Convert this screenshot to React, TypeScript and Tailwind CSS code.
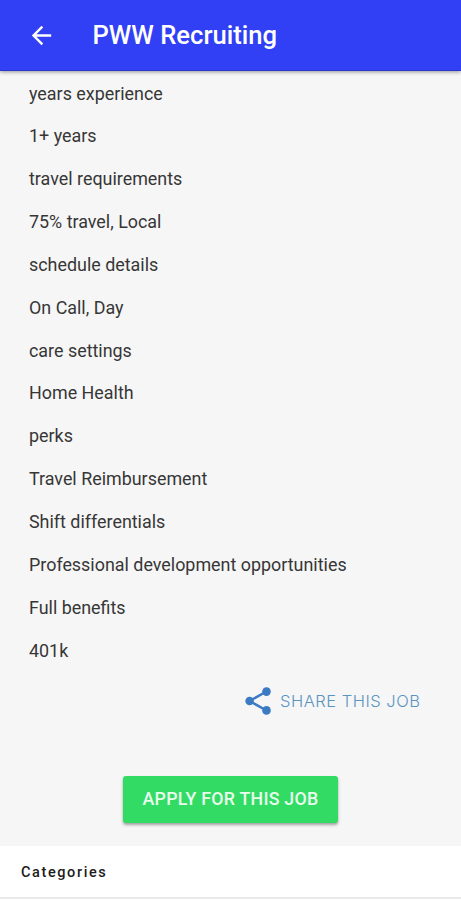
import { MdArrowBack } from "react-icons/md";

const details = [
  "years experience",
  "1+ years",
  "travel requirements",
  "75% travel, Local",
  "schedule details",
  "On Call, Day",
  "care settings",
  "Home Health",
  "perks",
  "Travel Reimbursement",
  "Shift differentials",
  "Professional development opportunities",
  "Full benefits",
  "401k",
];

function ShareIcon() {
  return (
    <svg viewBox="0 0 26 28" className="h-7 w-[26px] shrink-0 text-[#3d7ac4]" fill="currentColor">
      <path d="M21.5 4.5 4.5 14l17 9.5" fill="none" stroke="currentColor" strokeWidth="2.5" />
      <circle cx="21.5" cy="4.6" r="4.3" />
      <circle cx="4.6" cy="14" r="4.3" />
      <circle cx="21.5" cy="23.4" r="4.3" />
    </svg>
  );
}

export default function App() {
  return (
    <div className="flex h-[900px] w-full flex-col overflow-hidden bg-[#f6f6f6] font-['Roboto',sans-serif]">
      <header className="flex h-[71px] shrink-0 items-center border-b border-[#2a35d0] bg-[#313ff5] pl-[27px] text-white shadow-[0_1px_4px_rgba(0,0,0,0.4)]">
        <MdArrowBack className="size-[29px]" />
        <h1 className="ml-[36.5px] text-[25.6px] font-medium">PWW Recruiting</h1>
      </header>

      <ul className="flex shrink-0 flex-col pt-[1.6px] pl-[29px]">
        {details.map((line) => (
          <li key={line} className="flex h-[42.85px] items-center text-[17.9px] text-[#363636]">
            {line}
          </li>
        ))}
      </ul>

      <button className="mt-[14.4px] mr-[39px] flex h-7 shrink-0 items-center gap-[9px] self-end text-[#5a94c0]">
        <ShareIcon />
        <span className="w-[142px] pt-0.5 text-left font-['Inter',sans-serif] text-[16.5px] font-light tracking-[0.5px] whitespace-nowrap">
          SHARE THIS JOB
        </span>
      </button>

      <button className="mt-[61px] h-[47px] w-[215px] shrink-0 self-center rounded-[3px] bg-[#32dc64] text-[17.8px] font-medium tracking-[0.25px] text-[#e9fced] shadow-[0_2px_3px_rgba(0,0,0,0.35)]">
        APPLY FOR THIS JOB
      </button>

      <div className="mt-auto flex h-[54px] shrink-0 flex-col bg-white">
        <h2 className="flex h-[51px] items-center pt-[3px] pl-[21px] text-[14.5px] font-medium tracking-[1.6px] text-[#1c1c1c]">
          Categories
        </h2>
        <div className="h-[2px] bg-[#e9e9e9]" />
      </div>
    </div>
  );
}
